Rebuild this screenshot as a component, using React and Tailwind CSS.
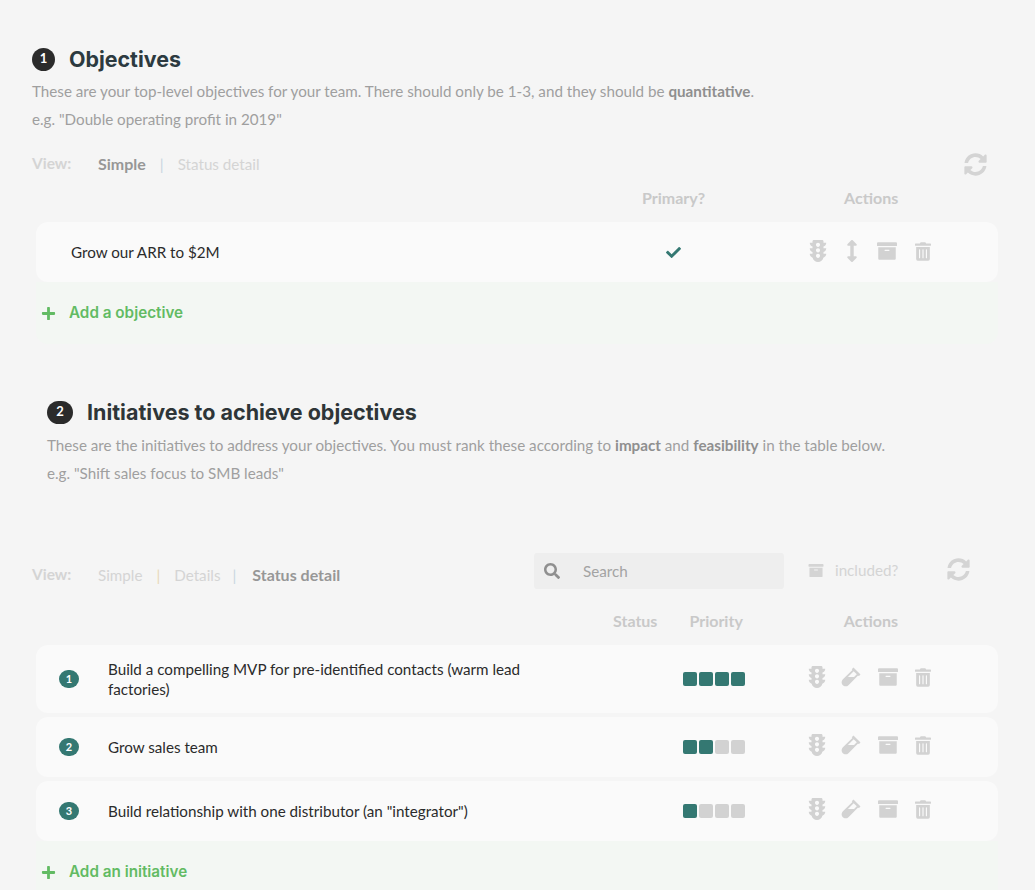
import { FaTrafficLight, FaArrowsAltV, FaArchive, FaTrashAlt, FaVial, FaSyncAlt, FaCheck, FaPlus, FaSearch } from "react-icons/fa";

const initiatives = [
  { id: 1, text: 'Build a compelling MVP for pre-identified contacts (warm lead factories)', score: 4, h: "h-[68px]" },
  { id: 2, text: "Grow sales team", score: 2, h: "h-[60px]" },
  { id: 3, text: 'Build relationship with one distributor (an "integrator")', score: 1, h: "h-[60px]" },
];

function StepBadge({ n }) {
  return (
    <span className="flex h-[23px] w-[23px] items-center justify-center rounded-full bg-[#2b2b2b] text-[13px] font-bold text-white">
      {n}
    </span>
  );
}

function AddRow({ label, className }) {
  return (
    <div className={`flex items-center rounded-b-xl bg-[#f3f7f3] pl-[5px] font-['Inter',sans-serif] text-[15.25px] font-semibold text-[#62bb63] ${className}`}>
      <FaPlus className="h-[15px] w-[15px]" />
      <span className="ml-[13px]">{label}</span>
    </div>
  );
}

function Priority({ score }) {
  return (
    <div className="flex gap-[2px]">
      {[1, 2, 3, 4].map((i) => (
        <span key={i} className={`h-[14px] w-[14px] rounded-[2px] ${i <= score ? "bg-[#347872]" : "bg-[#d2d2d2]"}`} />
      ))}
    </div>
  );
}

export default function App() {
  return (
    <div className="h-[890px] overflow-hidden bg-[#f5f5f5] font-['Lato','Noto_Sans',sans-serif] text-[15.2px]">
      {/* Objectives */}
      <section className="pl-[32px] pr-[37px] pt-[47px]">
        <div className="flex h-[24px] items-center">
          <StepBadge n={1} />
          <h2 className="ml-[14px] font-['Inter',sans-serif] text-[21.4px] font-bold text-[#2c3a40]">Objectives</h2>
        </div>
        <p className="mt-[6px] leading-[28px] text-[#9f9f9f]">
          These are your top-level objectives for your team. There should only be 1-3, and they should be{" "}
          <b className="text-[#8f8f8f]">quantitative</b>.
        </p>
        <p className="leading-[28px] text-[#9f9f9f]">e.g. "Double operating profit in 2019"</p>

        <div className="mt-[19px] flex h-[24px] items-center text-[#d4d4d4]">
          <b className="w-[66px] text-[15.5px]">View:</b>
          <b className="text-[16px] text-[#979797]">Simple</b>
          <span className="mx-[14px] text-[#c9d6e0]">|</span>
          <span>Status detail</span>
          <FaSyncAlt className="ml-auto mr-[11px] h-[23px] w-[23px] text-[#d4d4d4]" />
        </div>

        <div className="mt-[10px] flex h-[24px] items-center text-[16px] font-bold text-[#c9c9c9]">
          <span className="ml-[610px]">Primary?</span>
          <span className="ml-[139px]">Actions</span>
        </div>

        <div className="ml-[4px] mt-[12px] flex h-[60px] items-center rounded-xl bg-[#fafafa] pl-[35px] text-[#2b2b2b]">
          <span className="w-[595px]">Grow our ARR to $2M</span>
          <FaCheck className="h-[15px] w-[15px] text-[#347872]" />
          <div className="-mt-[2px] ml-[127px] flex items-center text-[#d2d2d2]">
            <FaTrafficLight className="h-[22px] w-[20px]" />
            <FaArrowsAltV className="ml-[14px] h-[22px] w-[20px]" />
            <FaArchive className="ml-[14px] h-[20px] w-[22px]" />
            <FaTrashAlt className="ml-[17px] h-[19px] w-[16px]" />
          </div>
        </div>
        <AddRow label="Add a objective" className="ml-[4px] h-[62px]" />
      </section>

      {/* Initiatives */}
      <section className="pt-[56px]">
        <div className="flex h-[24px] items-center pl-[47px]">
          <span className="flex h-[23px] w-[26px] items-center justify-center rounded-full bg-[#2b2b2b] text-[13px] font-bold text-white">2</span>
          <h2 className="ml-[14px] font-['Inter',sans-serif] text-[21.5px] font-bold text-[#2e3538]">Initiatives to achieve objectives</h2>
        </div>
        <p className="mt-[7px] pl-[47px] leading-[28px] text-[#9f9f9f]">
          These are the initiatives to address your objectives. You must rank these according to{" "}
          <b className="text-[#8f8f8f]">impact</b> and <b className="text-[#8f8f8f]">feasibility</b> in the table below.
        </p>
        <p className="pl-[47px] leading-[28px] text-[#9f9f9f]">e.g. "Shift sales focus to SMB leads"</p>

        <div className="mt-[66px] flex h-[36px] items-center pl-[32px] text-[#d4d4d4]">
          <div className="mt-[8px] flex w-[502px] items-center">
            <b className="w-[66px] text-[15.5px]">View:</b>
            <span>Simple</span>
            <span className="mx-[14px] text-[#e8d8b8]">|</span>
            <span>Details</span>
            <span className="mx-[12px] text-[#c9d6e0]">|</span>
            <b className="ml-[4px] text-[16px] text-[#979797]">Status detail</b>
          </div>
          <div className="flex h-[36px] w-[250px] items-center rounded-[3px] bg-[#eeeeee] pl-[10px] text-[#a3a3a3]">
            <FaSearch className="h-[16px] w-[16px] text-[#8f8f8f]" />
            <span className="ml-[23px]">Search</span>
          </div>
          <FaArchive className="-mt-[2px] ml-[24px] h-[15px] w-[16px]" />
          <span className="-mt-[2px] ml-[11px]">included?</span>
          <FaSyncAlt className="-mt-[3px] ml-[49px] h-[23px] w-[23px]" />
        </div>

        <div className="mt-[20px] flex h-[24px] items-center text-[16px] font-bold text-[#c9c9c9]">
          <span className="ml-[613px]">Status</span>
          <span className="ml-[32px]">Priority</span>
          <span className="ml-[101px]">Actions</span>
        </div>

        <div className="ml-[36px] mr-[37px] mt-[12px] flex flex-col gap-[4px] text-[#2b2b2b]">
          {initiatives.map((row) => (
            <div key={row.id} className={`flex items-center rounded-xl bg-[#fafafa] ${row.h}`}>
              <span className="ml-[23px] flex h-[18px] w-[20px] items-center justify-center rounded-full bg-[#347872] text-[11px] font-bold text-white">
                {row.id}
              </span>
              <span className="ml-[29px] w-[440px] leading-[20px]">{row.text}</span>
              <div className="ml-[135px]">
                <Priority score={row.score} />
              </div>
              <div className="-mt-[4px] ml-[62px] flex items-center text-[#d2d2d2]">
                <FaTrafficLight className="h-[22px] w-[20px]" />
                <FaVial className="ml-[13px] h-[20px] w-[22px]" />
                <FaArchive className="ml-[15px] h-[20px] w-[22px]" />
                <FaTrashAlt className="ml-[16px] h-[19px] w-[16px]" />
              </div>
            </div>
          ))}
          <AddRow label="Add an initiative" className="-mt-[4px] h-[62px]" />
        </div>
      </section>
    </div>
  );
}
